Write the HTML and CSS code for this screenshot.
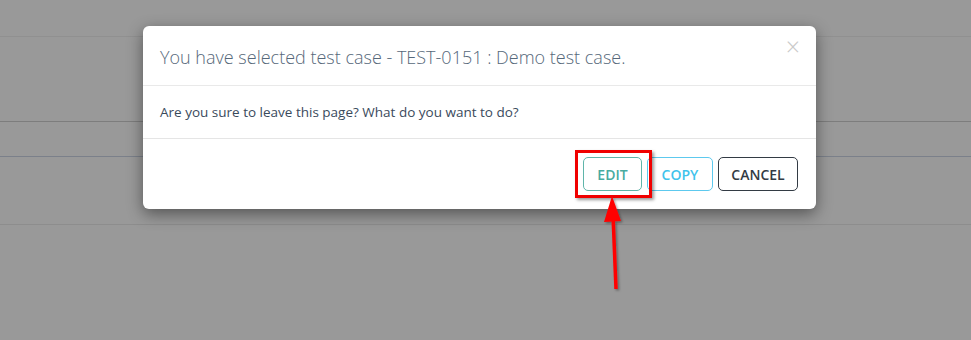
FILE: index.html
```html
<!DOCTYPE html>
<html>
<head>
<meta charset="utf-8">
<link rel="stylesheet" href="styles.css">
</head>
<body>
<div class="page">
  <div class="row row-top"></div>
  <div class="row row-a"></div>
  <div class="row row-b"></div>
  <div class="row row-c"></div>
  <div class="row row-d"></div>
</div>
<div class="modal">
  <div class="modal-header">
    <h4 class="modal-title">You have selected test case - TEST-0151 : Demo test case.</h4>
    <span class="close">&times;</span>
  </div>
  <div class="modal-body">Are you sure to leave this page? What do you want to do?</div>
  <div class="modal-footer">
    <button class="btn btn-edit">EDIT</button>
    <button class="btn btn-copy">COPY</button>
    <button class="btn btn-cancel">CANCEL</button>
  </div>
</div>
<div class="highlight"></div>
<svg class="arrow" width="40" height="100" viewBox="0 0 40 100">
  <defs>
    <filter id="sh" x="-50%" y="-20%" width="200%" height="150%">
      <feDropShadow dx="1.5" dy="1.5" stdDeviation="1" flood-color="#000" flood-opacity="0.35"/>
    </filter>
  </defs>
  <g filter="url(#sh)">
    <line x1="16" y1="22" x2="19" y2="96" stroke="#ff0000" stroke-width="3.5"/>
    <polygon points="15,3 7,29 24,28" fill="#ff0000"/>
  </g>
</svg>
</body>
</html>
```
FILE: styles.css
```css
html, body {
  margin: 0;
  padding: 0;
}
body {
  width: 971px;
  height: 340px;
  background: #999999;
  position: relative;
  overflow: hidden;
  font-family: "Open Sans", "Noto Sans", sans-serif;
}
.page {
  display: flex;
  flex-direction: column;
}
.row {
  border-bottom: 1px solid #8c8c8c;
}
.row-top { height: 36px; border-bottom-color: #909090; }
.row-a { height: 84px; border-bottom-color: #7d7d7d; }
.row-b { height: 34px; border-bottom-color: #7b808a; }
.row-c { height: 67px; border-bottom-color: #8d8d8d; }
.row-d { border-bottom: none; }

.modal {
  position: absolute;
  left: 143px;
  top: 26px;
  width: 673px;
  height: 183px;
  background: #fff;
  border-radius: 6px;
  box-shadow: 0 5px 16px rgba(0,0,0,0.45);
  display: flex;
  flex-direction: column;
}
.modal-header {
  height: 59px;
  border-bottom: 1px solid #e9e9e9;
  display: flex;
  align-items: center;
  padding: 0 17px;
  position: relative;
}
.modal-title {
  margin: 0;
  font-size: 18px;
  font-weight: 300;
  color: #56687a;
  padding-top: 3px;
}
.close {
  position: absolute;
  right: 16px;
  top: 8px;
  font-size: 25px;
  font-weight: 300;
  color: #cacaca;
  line-height: 1;
}
.modal-body {
  height: 52px;
  border-bottom: 1px solid #e5e5e5;
  display: flex;
  align-items: center;
  padding: 0 17px;
  font-size: 13.5px;
  color: #3a4a5c;
}
.modal-footer {
  flex: 1;
  display: flex;
  justify-content: flex-end;
  align-items: flex-start;
  padding: 18px 18px 0 0;
  gap: 5px;
}
.btn {
  height: 34px;
  border-radius: 5px;
  background: #fff;
  font-family: "Open Sans", "Noto Sans", sans-serif;
  font-size: 14px;
  font-weight: 600;
  padding: 0;
  border: 1px solid;
}
.btn-edit { color: #48ab9f; border-color: #5fb5aa; width: 59px; }
.btn-copy { color: #3fc3ec; border-color: #5dc9ee; width: 66px; }
.btn-cancel { color: #333b44; border-color: #333b44; width: 80px; }

.highlight {
  position: absolute;
  left: 575px;
  top: 150px;
  width: 71px;
  height: 42px;
  border: 3px solid #f00000;
  box-shadow: 2px 2px 3px rgba(0,0,0,0.4);
}
.arrow {
  position: absolute;
  left: 597px;
  top: 193px;
}
```
